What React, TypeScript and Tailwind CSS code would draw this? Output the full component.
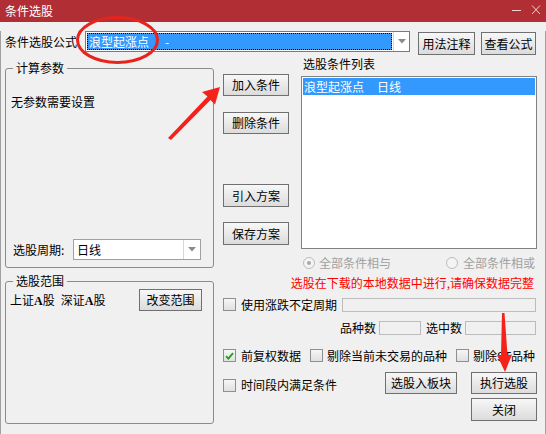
import type { ReactNode } from "react";

const Btn = ({ children, className = "" }: { children: ReactNode; className?: string }) => (
  <div
    className={`flex shrink-0 items-center justify-center border border-[#707070] bg-linear-to-b from-[#f7f7f7] to-[#dcdcdc] text-[12px] leading-none text-black ${className}`}
  >
    {children}
  </div>
);

const Check = ({ checked = false }: { checked?: boolean }) => (
  <span className="flex h-[13px] w-[13px] shrink-0 items-center justify-center border border-[#8f8f8f] bg-linear-to-b from-[#f6f6f6] to-[#e0e0e0]">
    {checked && (
      <svg width="9" height="8" viewBox="0 0 9 8">
        <path d="M1 4.2l2.4 2.4L8 1.2" stroke="#1f9e1f" strokeWidth="1.8" fill="none" />
      </svg>
    )}
  </span>
);

const Radio = ({ on = false }: { on?: boolean }) => (
  <span className="flex h-[12px] w-[12px] shrink-0 items-center justify-center rounded-full border border-[#bcbcbc] bg-[#f4f4f4]">
    {on && <span className="h-[4px] w-[4px] rounded-full bg-[#a8a8a8]" />}
  </span>
);

const DropArrow = () => (
  <svg width="8" height="5" viewBox="0 0 8 5">
    <path d="M0 0h8L4 4.5z" fill="#8a8a8a" />
  </svg>
);

const Group = ({ title, className = "", children }: { title: string; className?: string; children: ReactNode }) => (
  <div className={`relative rounded-[3px] border border-[#8c8c8c] ${className}`}>
    <span className="absolute -top-[8px] left-[7px] bg-[#f0f0f0] px-[3px] leading-[14px]">{title}</span>
    {children}
  </div>
);

export default function App() {
  return (
    <div className="relative h-[434px] w-[546px] select-none overflow-hidden bg-[#f0f0f0] font-['Noto_Sans_CJK_SC','Liberation_Sans',sans-serif] text-[12px] leading-[14px] text-black">
      {/* title bar */}
      <div className="flex h-[22px] items-center bg-[#b22e35] pl-[5px] text-white">
        <span>条件选股</span>
        <svg className="ml-auto mr-[5px]" width="34" height="22" viewBox="0 0 34 22">
          <path d="M5 10.5h9" stroke="#f3d0d0" strokeWidth="1" />
          <path d="M25 5.5l8 8.5M33 5.5l-8 8.5" stroke="#f3d0d0" strokeWidth="1" />
        </svg>
      </div>

      <div className="h-[412px] border-x border-b border-[#a0a0a0]">
        {/* formula row */}
        <div className="mt-[9px] flex h-[23px] items-start pl-[4px]">
          <span className="w-[80px] pt-[4px]">条件选股公式</span>
          <div className="flex h-[21px] w-[325px] border border-[#7a7a7a] bg-white">
            <div className="m-[1px] flex flex-1 items-center border border-dotted border-black bg-[#3399ff] pl-[1px] text-white">
              <span>浪型起涨点</span>
              <span className="ml-[16px]">-</span>
            </div>
            <div className="flex w-[16px] items-center justify-center border-l border-[#d6d6d6]">
              <DropArrow />
            </div>
          </div>
          <Btn className="ml-[8px] mt-[1px] h-[23px] w-[57px]">用法注释</Btn>
          <Btn className="ml-[6px] mt-[1px] h-[23px] w-[55px]">查看公式</Btn>
        </div>

        <div className="mt-[2px] flex">
          {/* left column */}
          <div className="ml-[4px] w-[209px]">
            <Group title="计算参数" className="mt-[12px] flex h-[200px] flex-col">
              <span className="ml-[5px] mt-[26px]">无参数需要设置</span>
              <div className="mb-[7px] mt-auto flex items-center pl-[7px]">
                <span className="w-[60px]">选股周期:</span>
                <div className="flex h-[21px] w-[128px] border border-[#a0a0a0] bg-white">
                  <span className="flex flex-1 items-center pl-[3px]">日线</span>
                  <div className="flex w-[17px] items-center justify-center border-l border-[#d6d6d6]">
                    <DropArrow />
                  </div>
                </div>
              </div>
            </Group>
            <Group title="选股范围" className="mt-[13px] h-[143px]">
              <div className="mt-[7px] flex items-center pl-[4px]">
                <span>
                  上证<span className="font-['Liberation_Serif',serif] font-bold">A</span>股
                  <span className="ml-[6px]">深证</span>
                  <span className="font-['Liberation_Serif',serif] font-bold">A</span>股
                </span>
                <Btn className="ml-auto mr-[11px] h-[22px] w-[63px]">改变范围</Btn>
              </div>
            </Group>
          </div>

          {/* right column */}
          <div className="ml-[9px] w-[314px]">
            <div className="flex">
              <div className="flex w-[66px] flex-col">
                <Btn className="mt-[18px] h-[22px] w-[66px]">加入条件</Btn>
                <Btn className="mt-[16px] h-[22px] w-[66px]">删除条件</Btn>
                <Btn className="mt-[50px] h-[23px] w-[66px]">引入方案</Btn>
                <Btn className="mt-[15px] h-[23px] w-[66px]">保存方案</Btn>
              </div>
              <div className="ml-[12px] flex w-[236px] flex-col">
                <span className="pl-[2px] leading-[16px]">选股条件列表</span>
                <div className="mt-[4px] h-[173px] border border-[#828282] bg-white p-[1px]">
                  <div className="flex h-[17px] items-center bg-[#3399ff] pl-[1px] text-white">
                    <span>浪型起涨点</span>
                    <span className="ml-[13px]">日线</span>
                  </div>
                </div>
              </div>
            </div>

            {/* radios */}
            <div className="mt-[6px] flex h-[16px] items-center text-[#a0a0a0]">
              <span className="ml-[80px]">
                <Radio on />
              </span>
              <span className="ml-[4px]">全部条件相与</span>
              <span className="ml-[55px]">
                <Radio />
              </span>
              <span className="ml-[5px]">全部条件相或</span>
            </div>

            <div className="mt-[4px] pr-[3px] text-right leading-[16px] text-[#ff0000]">
              选股在下载的本地数据中进行,请确保数据完整
            </div>

            <div className="mt-[6px] flex h-[15px] items-center">
              <Check />
              <span className="ml-[5px]">使用涨跌不定周期</span>
              <div className="ml-auto mr-[1px] h-[14px] w-[194px] border border-[#bcbcbc]" />
            </div>

            <div className="mt-[8px] flex h-[15px] items-center justify-end">
              <span>品种数</span>
              <div className="ml-[3px] h-[14px] w-[42px] border border-[#bcbcbc]" />
              <span className="ml-[5px]">选中数</span>
              <div className="ml-[3px] mr-[1px] h-[14px] w-[71px] border border-[#bcbcbc]" />
            </div>

            <div className="mt-[13px] flex h-[15px] items-center">
              <Check checked />
              <span className="ml-[5px]">前复权数据</span>
              <span className="ml-[9px]">
                <Check />
              </span>
              <span className="ml-[4px]">剔除当前未交易的品种</span>
              <span className="ml-[9px]">
                <Check />
              </span>
              <span className="ml-[4px]">剔除ST品种</span>
            </div>

            <div className="mt-[9px] flex items-start">
              <div className="mt-[6px] flex flex-1 items-center">
                <Check />
                <span className="ml-[5px]">时间段内满足条件</span>
              </div>
              <Btn className="h-[22px] w-[72px]">选股入板块</Btn>
              <div className="ml-[14px] flex w-[66px] flex-col">
                <Btn className="h-[22px] w-[66px]">执行选股</Btn>
                <Btn className="mt-[4px] h-[23px] w-[66px]">关闭</Btn>
              </div>
            </div>
          </div>
        </div>
      </div>

      {/* red annotations drawn on the screenshot */}
      <svg className="pointer-events-none absolute left-0 top-0" width="546" height="434" viewBox="0 0 546 434">
        <ellipse cx="117.5" cy="40" rx="40" ry="22.5" fill="none" stroke="#e8231c" strokeWidth="3" />
        <polygon
          points="168,138 207.5,96.5 202,92 220,87 215,104.5 210.5,100 171,140"
          fill="#f4221a"
        />
        <polygon
          points="502,313 504.5,313 507.5,355 512,354.5 505,372 497,355 501,355"
          fill="#f4221a"
        />
      </svg>
    </div>
  );
}
